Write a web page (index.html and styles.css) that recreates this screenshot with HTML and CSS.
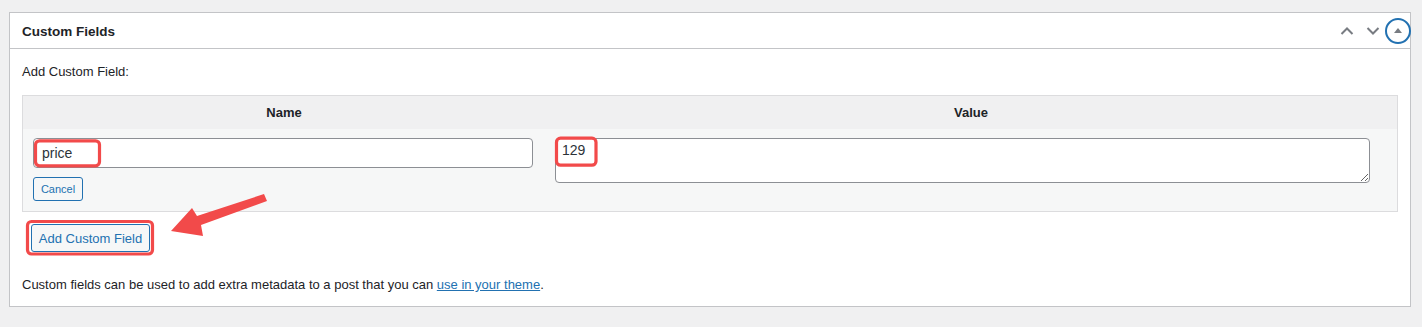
FILE: index.html
```html
<!DOCTYPE html>
<html>
<head>
<meta charset="utf-8">
<link rel="stylesheet" href="styles.css">
</head>
<body>
<div class="panel">
  <div class="panel-head">
    <h2 class="panel-title">Custom Fields</h2>
    <div class="panel-actions">
      <button class="icon-btn" aria-label="Move up">
        <svg width="14" height="10" viewBox="0 0 14 10"><path d="M1.5 8 L7 2.5 L12.5 8" fill="none" stroke="#787c82" stroke-width="2"/></svg>
      </button>
      <button class="icon-btn" aria-label="Move down">
        <svg width="14" height="10" viewBox="0 0 14 10"><path d="M1.5 2 L7 7.5 L12.5 2" fill="none" stroke="#787c82" stroke-width="2"/></svg>
      </button>
      <button class="icon-btn toggle" aria-label="Toggle panel">
        <svg width="28" height="28" viewBox="0 0 28 28"><circle cx="14" cy="14" r="12" fill="none" stroke="#2271b1" stroke-width="2"/><path d="M10 16 L14 11 L18 16 Z" fill="#787c82"/></svg>
      </button>
    </div>
  </div>
  <div class="panel-body">
    <p class="label">Add Custom Field:</p>
    <table class="meta-table">
      <thead>
        <tr><th class="col-name">Name</th><th class="col-value">Value</th></tr>
      </thead>
      <tbody>
        <tr>
          <td class="cell-name">
            <input class="name-input" type="text" value="price">
            <div><button class="btn-small">Cancel</button></div>
          </td>
          <td class="cell-value">
            <textarea class="value-input">129</textarea>
          </td>
        </tr>
      </tbody>
    </table>
    <div class="submit-row"><button class="btn-add">Add Custom Field</button></div>
    <p class="note">Custom fields can be used to add extra metadata to a post that you can <a href="#">use in your theme</a>.</p>
  </div>
</div>
<svg class="annotations" width="1422" height="327" viewBox="0 0 1422 327">
  <g fill="none" stroke="#f24a4a" stroke-width="3.2">
    <rect x="35.5" y="140.8" width="64" height="25" rx="4"/>
    <rect x="556.5" y="138.2" width="39.5" height="27" rx="4"/>
    <rect x="27.5" y="221.5" width="125" height="32.5" rx="4"/>
  </g>
  <polygon fill="#f24a4a" points="171,231 192,208 197,216 264,194 267,201 201,225 203,236"/>
</svg>
</body>
</html>
```
FILE: styles.css
```css
html, body {
  margin: 0;
  padding: 0;
}
body {
  background: #f0f0f1;
  font-family: "Liberation Sans", Arial, sans-serif;
  font-size: 13px;
  color: #1d2327;
  width: 1422px;
  height: 327px;
  position: relative;
  overflow: hidden;
}
.panel {
  box-sizing: border-box;
  margin: 12px 0 0 9px;
  width: 1402px;
  background: #fff;
  border: 1px solid #c3c4c7;
}
.panel-head {
  display: flex;
  align-items: center;
  justify-content: space-between;
  height: 35px;
  border-bottom: 1px solid #c3c4c7;
  padding-left: 12px;
}
.panel-title {
  margin: 0;
  font-size: 13.5px;
  font-weight: 700;
  line-height: 1.4;
  padding-top: 3px;
}
.panel-actions {
  display: flex;
  align-items: center;
  height: 100%;
}
.icon-btn {
  border: 0;
  background: none;
  padding: 0;
  width: 26px;
  height: 36px;
  display: flex;
  align-items: center;
  justify-content: center;
  margin-top: 1px;
  overflow: visible;
}
.icon-btn svg {
  flex: none;
  overflow: visible;
}
.icon-btn.toggle {
  width: 24px;
}
.panel-body {
  padding: 0 12px 12px 12px;
}
.label {
  margin: 13px 0 14px 0;
  line-height: 19px;
  font-weight: 400;
}
.meta-table {
  width: 1376px;
  border: 1px solid #dcdcde;
  border-collapse: separate;
  border-spacing: 0;
  background: #f6f7f7;
}
.meta-table th {
  background: #f0f0f1;
  height: 33px;
  padding: 0;
  font-size: 13px;
  font-weight: 700;
  text-align: center;
  vertical-align: middle;
}
.col-name { width: 522px; }
.meta-table td {
  padding: 9px 0 10px 10px;
  vertical-align: top;
}
.name-input {
  box-sizing: border-box;
  display: block;
  width: 500px;
  height: 30px;
  margin: 0;
  padding: 0 8px;
  border: 1px solid #8c8f94;
  border-radius: 4px;
  font-family: inherit;
  font-size: 14px;
  color: #2c3338;
  background: #fff;
}
.btn-small {
  margin-top: 9px;
  box-sizing: border-box;
  height: 24px;
  width: 50px;
  padding: 0;
  font-family: inherit;
  font-size: 11px;
  color: #2271b1;
  background: #f6f7f7;
  border: 1px solid #2271b1;
  border-radius: 3px;
}
.value-input {
  box-sizing: border-box;
  display: block;
  width: 815px;
  height: 45px;
  margin: 0;
  padding: 3px 6px;
  border: 1px solid #8c8f94;
  border-radius: 4px;
  font-family: inherit;
  font-size: 14px;
  color: #2c3338;
  background: #fff;
  resize: both;
}
.submit-row {
  margin-top: 12px;
  padding-left: 9px;
}
.btn-add {
  box-sizing: border-box;
  height: 28px;
  width: 119px;
  padding: 0;
  font-family: inherit;
  font-size: 13px;
  color: #2271b1;
  background: #f6f7f7;
  border: 1px solid #2271b1;
  border-radius: 3px;
}
.note {
  margin: 23px 0 0 0;
  line-height: 19px;
}
.note a {
  color: #2271b1;
  text-decoration: underline;
}
.annotations {
  position: absolute;
  left: 0;
  top: 0;
  pointer-events: none;
}
```
